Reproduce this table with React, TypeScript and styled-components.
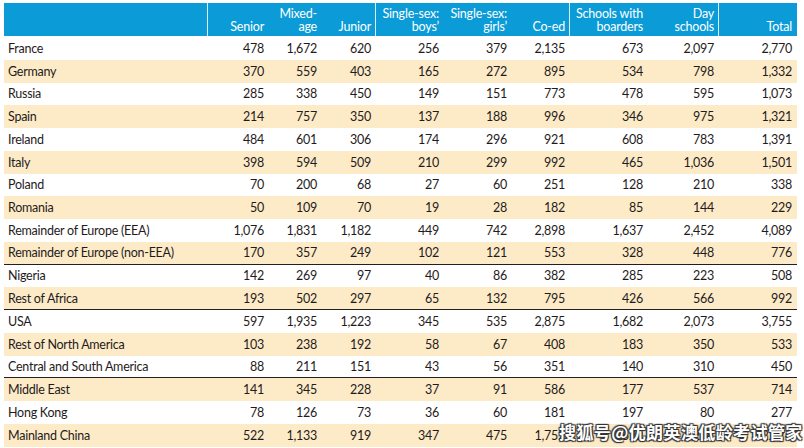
import styled, { createGlobalStyle } from "styled-components";

const GlobalStyle = createGlobalStyle`
  html, body {
    margin: 0;
    padding: 0;
    background: #ffffff;
  }
  body {
    font-family: Lato, "Noto Sans", sans-serif;
    color: #1f1b1c;
  }
`;

const COLUMNS = "204px 61px 53px 54px 68px 68px 58px 78px 71px 78px";

const Page = styled.div`
  position: relative;
  width: 804px;
  height: 448px;
  padding: 3px 0 0 4px;
  box-sizing: border-box;
  overflow: hidden;
`;

const Table = styled.div`
  width: 793px;
  display: flex;
  flex-direction: column;
`;

const Header = styled.div`
  display: grid;
  grid-template-columns: ${COLUMNS};
  height: 33px;
  margin-bottom: 1px;
  background: #0b9bd7;
  color: #ffffff;
  font-size: 12.5px;
  letter-spacing: -0.2px;
  line-height: 13px;
`;

const HeadCell = styled.div<{ $rule?: boolean }>`
  display: flex;
  flex-direction: column;
  justify-content: flex-end;
  align-items: flex-end;
  text-align: right;
  padding: 0 5px 3px 0;
  border-left: ${(p) => (p.$rule ? "1px solid rgba(255,255,255,0.85)" : "none")};
  margin-left: ${(p) => (p.$rule ? "-1px" : "0")};
  white-space: nowrap;
`;

const Row = styled.div<{ $shade?: boolean; $rule?: boolean }>`
  display: grid;
  grid-template-columns: ${COLUMNS};
  height: 22.76px;
  box-sizing: border-box;
  align-items: center;
  font-size: 12.5px;
  letter-spacing: -0.25px;
  background: ${(p) => (p.$shade ? "#fdebc8" : "#ffffff")};
  border-bottom: ${(p) => (p.$rule ? "1.5px solid #231f20" : "none")};
`;

const Label = styled.div`
  padding-left: 4px;
  white-space: nowrap;
`;

const Num = styled.div`
  text-align: right;
  padding-right: 5px;
`;

const Watermark = styled.div`
  position: absolute;
  left: 559px;
  top: 419px;
  font-family: "Noto Sans CJK SC", sans-serif;
  font-size: 17px;
  font-weight: 700;
  letter-spacing: 0.4px;
  color: #ffffff;
  text-shadow: 0 0 1px #333, 1px 1px 1px #333, -1px -1px 1px #333, 1px -1px 1px #333,
    -1px 1px 1px #333;
  white-space: nowrap;
`;

type Entry = { name: string; values: string[]; rule?: boolean };

const headers: { lines: string[]; rule?: boolean }[] = [
  { lines: [""] },
  { lines: ["Senior"], rule: true },
  { lines: ["Mixed-", "age"] },
  { lines: ["Junior"] },
  { lines: ["Single-sex:", "boys’"], rule: true },
  { lines: ["Single-sex:", "girls’"] },
  { lines: ["Co-ed"] },
  { lines: ["Schools with", "boarders"], rule: true },
  { lines: ["Day", "schools"] },
  { lines: ["Total"], rule: true },
];

const data: Entry[] = [
  { name: "France", values: ["478", "1,672", "620", "256", "379", "2,135", "673", "2,097", "2,770"] },
  { name: "Germany", values: ["370", "559", "403", "165", "272", "895", "534", "798", "1,332"] },
  { name: "Russia", values: ["285", "338", "450", "149", "151", "773", "478", "595", "1,073"] },
  { name: "Spain", values: ["214", "757", "350", "137", "188", "996", "346", "975", "1,321"] },
  { name: "Ireland", values: ["484", "601", "306", "174", "296", "921", "608", "783", "1,391"] },
  { name: "Italy", values: ["398", "594", "509", "210", "299", "992", "465", "1,036", "1,501"] },
  { name: "Poland", values: ["70", "200", "68", "27", "60", "251", "128", "210", "338"] },
  { name: "Romania", values: ["50", "109", "70", "19", "28", "182", "85", "144", "229"] },
  { name: "Remainder of Europe (EEA)", values: ["1,076", "1,831", "1,182", "449", "742", "2,898", "1,637", "2,452", "4,089"] },
  { name: "Remainder of Europe (non-EEA)", values: ["170", "357", "249", "102", "121", "553", "328", "448", "776"], rule: true },
  { name: "Nigeria", values: ["142", "269", "97", "40", "86", "382", "285", "223", "508"] },
  { name: "Rest of Africa", values: ["193", "502", "297", "65", "132", "795", "426", "566", "992"], rule: true },
  { name: "USA", values: ["597", "1,935", "1,223", "345", "535", "2,875", "1,682", "2,073", "3,755"] },
  { name: "Rest of North America", values: ["103", "238", "192", "58", "67", "408", "183", "350", "533"] },
  { name: "Central and South America", values: ["88", "211", "151", "43", "56", "351", "140", "310", "450"], rule: true },
  { name: "Middle East", values: ["141", "345", "228", "37", "91", "586", "177", "537", "714"] },
  { name: "Hong Kong", values: ["78", "126", "73", "36", "60", "181", "197", "80", "277"] },
  { name: "Mainland China", values: ["522", "1,133", "919", "347", "475", "1,752", "1,522", "1,264", "2,574"] },
];

export default function App() {
  return (
    <>
      <GlobalStyle />
      <Page>
        <Table>
          <Header>
            {headers.map((h, i) => (
              <HeadCell key={i} $rule={h.rule}>
                {h.lines.map((l, j) => (
                  <span key={j}>{l}</span>
                ))}
              </HeadCell>
            ))}
          </Header>
          {data.map((row, i) => (
            <Row key={row.name} $shade={i % 2 === 1} $rule={row.rule}>
              <Label>{row.name}</Label>
              {row.values.map((v, j) => (
                <Num key={j}>{v}</Num>
              ))}
            </Row>
          ))}
        </Table>
        <Watermark>搜狐号@优朗英澳低龄考试管家</Watermark>
      </Page>
    </>
  );
}
